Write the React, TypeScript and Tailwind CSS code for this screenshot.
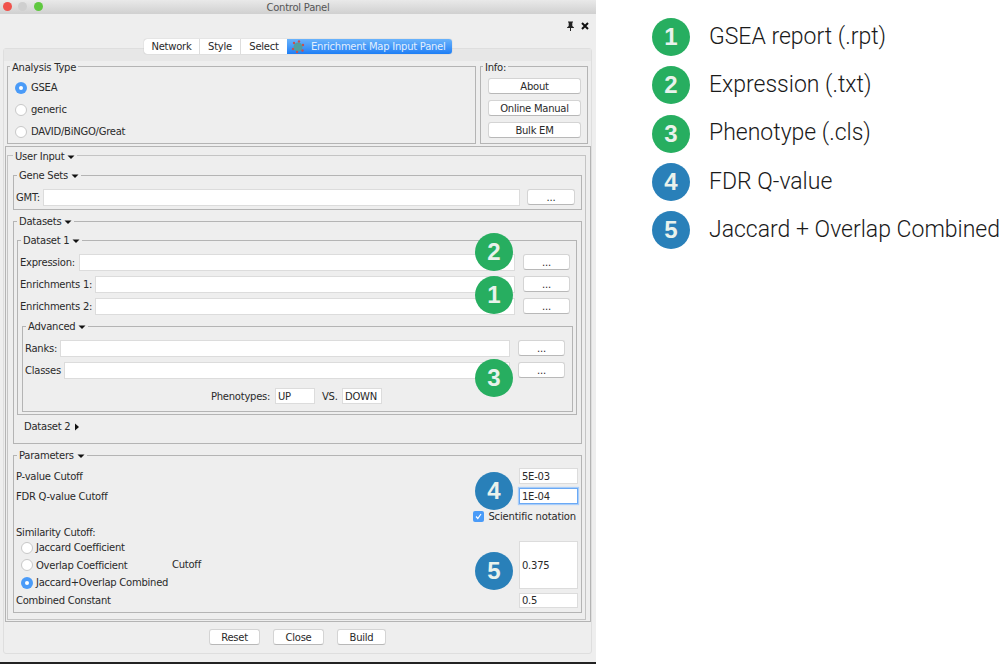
import type { ReactNode } from "react";

const badgeGreen = "bg-[#27ae60]";
const badgeBlue = "bg-[#2980b9]";

function Arrow({ right }: { right?: boolean }) {
  return (
    <svg width="8" height="8" viewBox="0 0 8 8" className="inline-block ml-[3px] align-[-1px]">
      {right ? <path d="M2 0.5 L6 4 L2 7.5 Z" fill="#111" /> : <path d="M0.5 2.5 H7.5 L4 6 Z" fill="#111" />}
    </svg>
  );
}

function Group({ title, arrow = true, titlePos = "left-[3px] top-[-7px]", className, children }: { title: string; arrow?: boolean; titlePos?: string; className: string; children?: ReactNode }) {
  return (
    <div className={`relative border border-[#b4b4b4] ${className}`}>
      <div className={`absolute h-[13px] leading-[14px] bg-[#eeeeee] px-[2px] whitespace-nowrap ${titlePos}`}>
        {title}
        {arrow && <Arrow />}
      </div>
      {children}
    </div>
  );
}

function Field({ className, value, focus }: { className: string; value?: string; focus?: boolean }) {
  return (
    <div
      className={`bg-white pl-[2px] flex items-center shrink-0 ${
        focus ? "border border-[#6aa9f5] shadow-[0_0_1px_1px_#a9cdf8]" : "border border-[#dcdcdc]"
      } ${className}`}
    >
      {value}
    </div>
  );
}

function Btn({ label, className }: { label: string; className: string }) {
  return (
    <button className={`bg-white rounded-[3px] border border-[#d4d4d4] border-b-[#b8b8b8] flex items-center justify-center shrink-0 h-[16px] ${className}`}>
      {label}
    </button>
  );
}

function Radio({ on }: { on?: boolean }) {
  return on ? (
    <span className="w-[12px] h-[12px] rounded-full bg-[#4a9bf8] flex items-center justify-center shrink-0">
      <span className="w-[4px] h-[4px] rounded-full bg-white" />
    </span>
  ) : (
    <span className="w-[12px] h-[12px] rounded-full bg-white border border-[#c8c8c8] shrink-0" />
  );
}

function Badge({ n, color, className = "" }: { n: number; color: string; className?: string }) {
  return (
    <div className={`w-[38px] h-[38px] rounded-full flex items-center justify-center text-[#e9f2ec] font-bold text-[24px] tracking-normal font-['Liberation_Sans',sans-serif] shrink-0 ${color} ${className}`}>
      {n}
    </div>
  );
}

function PathRow({ label, labelWidth, inputWidth, className = "" }: { label: string; labelWidth: string; inputWidth: string; className?: string }) {
  return (
    <div className={`flex items-start h-[17px] ${className}`}>
      <span className={`leading-[17px] shrink-0 ${labelWidth}`}>{label}</span>
      <Field className={`h-[17px] ${inputWidth}`} />
      <Btn label="..." className="w-[47px] ml-[8px]" />
    </div>
  );
}

const legend = [
  { n: 1, color: badgeGreen, text: "GSEA report (.rpt)" },
  { n: 2, color: badgeGreen, text: "Expression (.txt)" },
  { n: 3, color: badgeGreen, text: "Phenotype (.cls)" },
  { n: 4, color: badgeBlue, text: "FDR Q-value" },
  { n: 5, color: badgeBlue, text: "Jaccard + Overlap Combined" },
];

export default function App() {
  return (
    <div className="flex w-[1000px] h-[664px] bg-white overflow-hidden">
      <div className="relative w-[596px] h-[664px] shrink-0 flex flex-col bg-[#eeeeee] border-b-2 border-[#222222] text-[10px] tracking-[-0.25px] whitespace-nowrap text-[#2a2a2a] font-['DejaVu_Sans',sans-serif]">
        {/* title bar */}
        <div className="relative h-[14px] bg-gradient-to-b from-[#e9e9e9] to-[#d0d0d0] flex items-center justify-center text-[#555555] shrink-0">
          <div className="absolute left-[3px] top-0 h-[13px] flex items-center">
            <span className="w-[9px] h-[9px] rounded-full bg-[#f0524c]" />
            <span className="w-[9px] h-[9px] ml-[6px] rounded-full bg-[#cfcfcf]" />
            <span className="w-[9px] h-[9px] ml-[7px] rounded-full bg-[#5fc83f]" />
          </div>
          Control Panel
        </div>

        {/* pin and close */}
        <div className="h-[20px] flex items-center justify-end gap-[6px] pr-[7px] pt-[3px] shrink-0">
          <svg width="9" height="10" viewBox="0 0 9 10">
            <path d="M2 0.5 H7 V1.5 H6.3 V5 L8 6.5 V7 H5 V10 H4 V7 H1 V6.5 L2.7 5 V1.5 H2 Z" fill="#222" />
          </svg>
          <svg width="8" height="8" viewBox="0 0 8 8">
            <path d="M1 1 L7 7 M7 1 L1 7" stroke="#111" strokeWidth="2" />
          </svg>
        </div>

        {/* tabs */}
        <div className="relative z-10 mt-[5px] -mb-[6px] flex justify-center shrink-0">
          <div className="flex h-[15px] w-[308px] bg-white rounded-[3px] shadow-[0_0_1px_#999999] leading-[15px] text-center">
            <span className="w-[56px] border-r border-[#dddddd]">Network</span>
            <span className="w-[41px] border-r border-[#dddddd]">Style</span>
            <span className="w-[46px]">Select</span>
            <span className="w-[165px] flex items-center rounded-r-[3px] bg-gradient-to-b from-[#69b3fb] to-[#1c7ef5] text-[#e2effd]">
              <svg width="16" height="14" viewBox="0 0 16 14" className="ml-[3px] mr-[5px] shrink-0">
                <circle cx="8" cy="7" r="4.5" fill="#4f9fa0" />
                <circle cx="4" cy="3" r="1.2" fill="#c9504f" />
                <circle cx="9" cy="1.5" r="1.2" fill="#c9504f" />
                <circle cx="13" cy="5" r="1.2" fill="#c9504f" />
                <circle cx="12.5" cy="10.5" r="1.2" fill="#c9504f" />
                <circle cx="7" cy="12" r="1.2" fill="#c9504f" />
                <circle cx="3" cy="9" r="1.2" fill="#c9504f" />
              </svg>
              Enrichment Map Input Panel
            </span>
          </div>
        </div>

        {/* tabbed pane */}
        <div className="mx-[3px] w-[589px] h-[606px] shrink-0 border border-[#dedede] rounded-[3px]">
          <div className="h-[12px] bg-[#e7e7e7]" />
          <div className="flex mt-[5px] ml-[3px] gap-[4px]">
            <Group title="Analysis Type" arrow={false} titlePos="left-[2px] top-[-6px]" className="w-[469px] h-[78px] pl-[7px] pt-[14px]">
              <div className="flex flex-col gap-[9px]">
                <div className="flex items-center gap-[4px] h-[13px]"><Radio on />GSEA</div>
                <div className="flex items-center gap-[4px] h-[13px]"><Radio />generic</div>
                <div className="flex items-center gap-[4px] h-[13px]"><Radio />DAVID/BiNGO/Great</div>
              </div>
            </Group>
            <Group title="Info:" arrow={false} titlePos="left-[2px] top-[-6px]" className="w-[108px] h-[78px] pl-[7px] pt-[11px]">
              <div className="flex flex-col gap-[6px]">
                <Btn label="About" className="w-[93px]" />
                <Btn label="Online Manual" className="w-[93px]" />
                <Btn label="Bulk EM" className="w-[93px]" />
              </div>
            </Group>
          </div>

          {/* user input */}
          <div className="mt-[2px] ml-[1px] w-[586px] h-[476px] border border-[#b4b4b4] pt-[8px] pl-[1px]">
            <Group title="User Input" titlePos="left-[5px] top-[-6px]" className="w-[579px] h-[465px] pl-[5px] pt-[19px] border-[#c4c4c4]">
              <Group title="Gene Sets" className="w-[569px] h-[35px] pl-[2px] pt-[13px]">
                <div className="flex items-start h-[17px]">
                  <span className="w-[27px] leading-[17px] shrink-0">GMT:</span>
                  <Field className="w-[477px] h-[17px]" />
                  <Btn label="..." className="w-[48px] ml-[7px]" />
                </div>
              </Group>

              <Group title="Datasets" className="mt-[11px] w-[569px] h-[223px] pl-[3px] pt-[18px]">
                <Group title="Dataset 1" className="w-[560px] h-[175px] pl-[2px] pt-[13px]">
                  <div className="flex flex-col gap-[5px]">
                    <PathRow label="Expression:" labelWidth="w-[59px]" inputWidth="w-[436px]" />
                    <PathRow label="Enrichments 1:" labelWidth="w-[75px]" inputWidth="w-[420px]" />
                    <PathRow label="Enrichments 2:" labelWidth="w-[75px]" inputWidth="w-[420px]" />
                  </div>
                  <Group title="Advanced" className="mt-[11px] ml-[2px] w-[551px] h-[86px] pl-[2px] pt-[13px]">
                    <div className="flex flex-col gap-[5px]">
                      <PathRow label="Ranks:" labelWidth="w-[35px]" inputWidth="w-[450px]" />
                      <PathRow label="Classes" labelWidth="w-[39px]" inputWidth="w-[446px]" />
                    </div>
                    <div className="flex items-center h-[16px] mt-[9px] pl-[186px]">
                      <span className="w-[64px]">Phenotypes:</span>
                      <Field className="w-[40px] h-[16px]" value="UP" />
                      <span className="ml-[7px] w-[20px]">VS.</span>
                      <Field className="w-[40px] h-[16px]" value="DOWN" />
                    </div>
                  </Group>
                </Group>
                <div className="mt-[5px] pl-[7px] h-[14px] leading-[14px]">
                  Dataset 2
                  <Arrow right />
                </div>
              </Group>

              <Group title="Parameters" className="mt-[11px] w-[569px] h-[158px] pl-[2px] pr-[3px] pt-[12px]">
                <div className="flex items-center justify-between h-[16px]">
                  <span>P-value Cutoff</span>
                  <Field className="w-[59px] h-[16px]" value="5E-03" />
                </div>
                <div className="flex items-center justify-between h-[16px] mt-[4px]">
                  <span>FDR Q-value Cutoff</span>
                  <Field className="w-[59px] h-[16px]" value="1E-04" focus />
                </div>
                <div className="flex items-center justify-end gap-[4px] h-[12px] mt-[6px] pr-[2px] tracking-[-0.15px]">
                  <span className="w-[11px] h-[11px] rounded-[2px] bg-[#4a9bf8] flex items-center justify-center shrink-0">
                    <svg width="9" height="9" viewBox="0 0 9 9">
                      <path d="M2 4.5 L3.8 6.5 L7 2" stroke="#fff" strokeWidth="1.2" fill="none" />
                    </svg>
                  </span>
                  Scientific notation
                </div>
                <div className="h-[12px] leading-[12px] mt-[5px]">Similarity Cutoff:</div>
                <div className="flex items-start h-[52px]">
                  <div className="w-[156px] pl-[5px] shrink-0">
                    <div className="flex items-center gap-[3px] h-[17px]"><Radio />Jaccard Coefficient</div>
                    <div className="flex items-center gap-[3px] h-[18px]"><Radio />Overlap Coefficient</div>
                    <div className="flex items-center gap-[3px] h-[17px]"><Radio on />Jaccard+Overlap Combined</div>
                  </div>
                  <span className="leading-[17px] mt-[17px]">Cutoff</span>
                  <Field className="ml-auto mt-[2px] w-[59px] h-[48px]" value="0.375" />
                </div>
                <div className="flex items-center justify-between h-[15px] mt-[2px]">
                  <span>Combined Constant</span>
                  <Field className="w-[59px] h-[15px]" value="0.5" />
                </div>
              </Group>
            </Group>
          </div>

          {/* footer buttons */}
          <div className="flex justify-center gap-[13px] mt-[7px]">
            <Btn label="Reset" className="w-[51px]" />
            <Btn label="Close" className="w-[51px]" />
            <Btn label="Build" className="w-[49px]" />
          </div>
        </div>

        {/* numbered callouts over the form */}
        <Badge n={2} color={badgeGreen} className="absolute left-[475px] top-[233px]" />
        <Badge n={1} color={badgeGreen} className="absolute left-[475px] top-[276px]" />
        <Badge n={3} color={badgeGreen} className="absolute left-[475px] top-[359px]" />
        <Badge n={4} color={badgeBlue} className="absolute left-[475px] top-[472px]" />
        <Badge n={5} color={badgeBlue} className="absolute left-[475px] top-[552px]" />
      </div>

      {/* legend */}
      <div className="pl-[56px] pt-[13px] flex flex-col font-['Roboto',sans-serif] font-light text-[23px] text-[#1a1a1a]">
        {legend.map((item) => (
          <div key={item.n} className="flex items-center h-[48.25px] whitespace-nowrap">
            <Badge n={item.n} color={item.color} />
            <span className="ml-[19px]">{item.text}</span>
          </div>
        ))}
      </div>
    </div>
  );
}
